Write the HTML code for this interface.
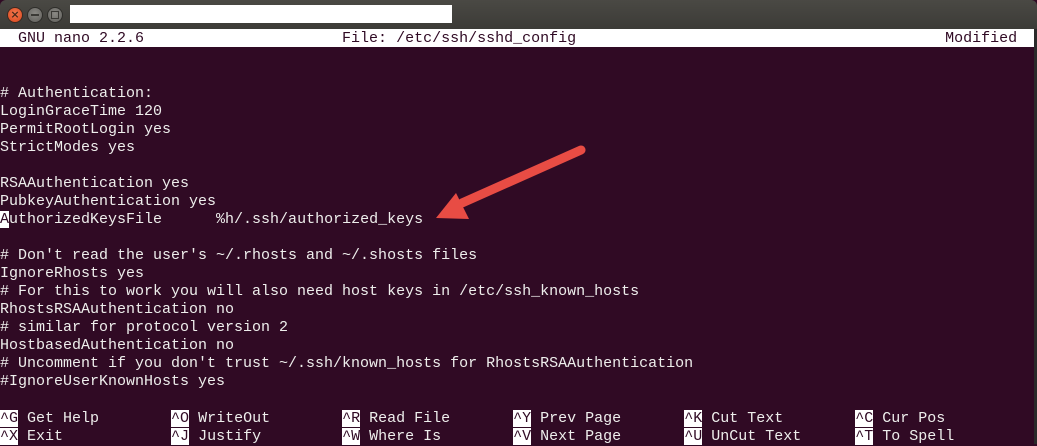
<!DOCTYPE html>
<html><head><meta charset="utf-8"><style>
html,body{margin:0;padding:0}
body{width:1037px;height:444px;overflow:hidden;background:#300a24;position:relative;font-family:"Liberation Mono","DejaVu Sans Mono",monospace;font-size:15px;color:#eeeeec}
.tb{position:absolute;left:0;top:0;width:1037px;height:29px;background:linear-gradient(#4a4944,#3c3b37);border-radius:6px 6px 0 0}
.title{position:absolute;left:70px;top:5px;width:382px;height:18px;background:#fff}
.btn{position:absolute;top:7px;width:16px;height:16px;border-radius:50%;box-sizing:border-box}
.r{position:absolute;left:0;height:18px;line-height:18px;white-space:pre;margin-top:2px}
.hd{position:absolute;left:0;top:29px;width:1034px;height:18px;background:#fff;color:#300a24;line-height:20px;white-space:pre}
.k{background:#fff;color:#300a24}
.rb{position:absolute;right:0;top:29px;width:3px;height:415px;background:#2a2a2a}
</style></head><body>
<div class="tb"></div>
<div class="btn" style="left:7px;background:radial-gradient(circle at 50% 40%,#f47a50,#d9451b);border:1px solid #3a2a22"></div>
<div style="position:absolute;left:10px;top:7px;width:10px;height:16px;color:#4a2a1a;font:bold 11px 'DejaVu Sans';line-height:16px;text-align:center">×</div>
<div class="btn" style="left:27px;background:radial-gradient(circle at 50% 40%,#8a8984,#5f5e5a);border:1px solid #2e2d2a"></div>
<div style="position:absolute;left:31px;top:14px;width:8px;height:2px;background:#3a3935"></div>
<div class="btn" style="left:47px;background:radial-gradient(circle at 50% 40%,#8a8984,#5f5e5a);border:1px solid #2e2d2a"></div>
<div style="position:absolute;left:51px;top:11px;width:6px;height:6px;border:1px solid #3a3935"></div>
<div class="title"></div>
<div class="hd">  GNU nano 2.2.6                      File: /etc/ssh/sshd_config                                         Modified</div>
<div class="r" style="top:83px"># Authentication:</div>
<div class="r" style="top:101px">LoginGraceTime 120</div>
<div class="r" style="top:119px">PermitRootLogin yes</div>
<div class="r" style="top:137px">StrictModes yes</div>
<div class="r" style="top:173px">RSAAuthentication yes</div>
<div class="r" style="top:191px">PubkeyAuthentication yes</div>
<div class="r" style="top:209px"><span class="k">A</span>uthorizedKeysFile      %h/.ssh/authorized_keys</div>
<div class="r" style="top:245px"># Don't read the user's ~/.rhosts and ~/.shosts files</div>
<div class="r" style="top:263px">IgnoreRhosts yes</div>
<div class="r" style="top:281px"># For this to work you will also need host keys in /etc/ssh_known_hosts</div>
<div class="r" style="top:299px">RhostsRSAAuthentication no</div>
<div class="r" style="top:317px"># similar for protocol version 2</div>
<div class="r" style="top:335px">HostbasedAuthentication no</div>
<div class="r" style="top:353px"># Uncomment if you don't trust ~/.ssh/known_hosts for RhostsRSAAuthentication</div>
<div class="r" style="top:371px">#IgnoreUserKnownHosts yes</div>
<div class="r" style="top:408px"><span class="k">^G</span> Get Help        <span class="k">^O</span> WriteOut        <span class="k">^R</span> Read File       <span class="k">^Y</span> Prev Page       <span class="k">^K</span> Cut Text        <span class="k">^C</span> Cur Pos</div>
<div class="r" style="top:426px"><span class="k">^X</span> Exit            <span class="k">^J</span> Justify         <span class="k">^W</span> Where Is        <span class="k">^V</span> Next Page       <span class="k">^U</span> UnCut Text      <span class="k">^T</span> To Spell</div>
<div class="rb"></div>
<svg style="position:absolute;left:0;top:0" width="1037" height="444">
<line x1="581" y1="150" x2="462" y2="203" stroke="#e84c44" stroke-width="9" stroke-linecap="round"/>
<polygon points="436,218 456,193 469,219" fill="#e84c44"/>
</svg>
</body></html>
